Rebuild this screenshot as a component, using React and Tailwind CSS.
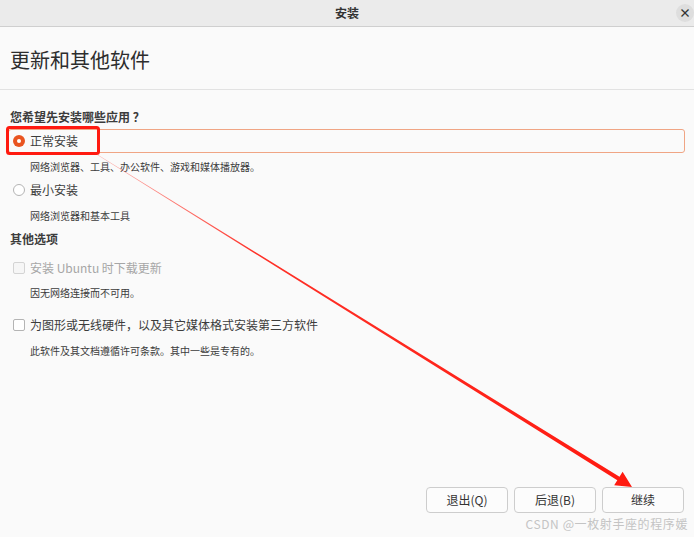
export default function App() {
    const font = { fontFamily: '"Noto Sans CJK SC", "Noto Sans", sans-serif' };
    return (
        <div
            style={font}
            className="relative w-[694px] h-[537px] bg-[#fafafa] text-[#3c3c3c] flex flex-col overflow-hidden"
        >
            {/* title bar */}
            <div className="h-[27px] shrink-0 bg-[#ebebeb] border-b border-[#cfcfcf] flex items-center justify-center relative">
                <span className="text-[12px] font-bold text-[#333]">安装</span>
                <div className="absolute right-[0px] top-[4px] w-[18px] h-[18px] rounded-full bg-[#dedede] flex items-center justify-center text-[12px] font-bold text-[#333]">
                    ×
                </div>
            </div>

            {/* heading */}
            <div className="h-[63px] shrink-0 border-b border-[#e2e2e2] flex items-center px-[10px]">
                <span className="text-[20px] text-[#2d2d2d] mt-[3px]">更新和其他软件</span>
            </div>

            {/* body */}
            <div className="flex flex-col px-[10px]">
                <div className="mt-[19px] h-[16px] leading-[16px] text-[12px] font-bold">您希望先安装哪些应用 ？</div>

                <div className="mt-[4px] ml-[-2px] mr-[-1px] h-[24px] border border-[#f0a584] rounded-[3px] flex items-center pl-[4px]">
                    <div className="w-[12px] h-[12px] rounded-full bg-[#e95420] flex items-center justify-center">
                        <div className="w-[4px] h-[4px] rounded-full bg-white"></div>
                    </div>
                    <span className="ml-[5px] text-[12px]">正常安装</span>
                </div>
                <div className="mt-[7px] h-[14px] leading-[14px] pl-[20px] text-[10px]">
                    网络浏览器、工具、办公软件、游戏和媒体播放器。
                </div>

                <div className="mt-[4px] h-[24px] flex items-center pl-[3px]">
                    <div className="w-[12px] h-[12px] rounded-full border border-[#b4b4b4] bg-white"></div>
                    <span className="ml-[5px] text-[12px]">最小安装</span>
                </div>
                <div className="mt-[7px] h-[14px] leading-[14px] pl-[20px] text-[10px]">网络浏览器和基本工具</div>

                <div className="mt-[8px] h-[16px] leading-[16px] text-[12px] font-bold">其他选项</div>

                <div className="mt-[9px] h-[24px] flex items-center pl-[3px]">
                    <div className="w-[12px] h-[12px] rounded-[2px] border border-[#d4d4d4] bg-[#f6f6f6]"></div>
                    <span className="ml-[5px] text-[12px] text-[#a6a6a6]">安装 Ubuntu 时下载更新</span>
                </div>
                <div className="mt-[6px] h-[14px] leading-[14px] pl-[20px] text-[10px]">因无网络连接而不可用。</div>

                <div className="mt-[13px] h-[24px] flex items-center pl-[3px]">
                    <div className="w-[12px] h-[12px] rounded-[2px] border border-[#b4b4b4] bg-white"></div>
                    <span className="ml-[5px] text-[12px]">为图形或无线硬件，以及其它媒体格式安装第三方软件</span>
                </div>
                <div className="mt-[7px] h-[14px] leading-[14px] pl-[20px] text-[10px]">
                    此软件及其文档遵循许可条款。其中一些是专有的。
                </div>
            </div>

            <div className="flex-1"></div>

            {/* footer buttons */}
            <div className="flex justify-end gap-[6px] pr-[10px] mb-[24px]">
                <button className="w-[82px] h-[26px] rounded-[4px] border border-[#cdcdcd] bg-[#fcfcfc] text-[12px] text-[#333]">
                    退出(Q)
                </button>
                <button className="w-[82px] h-[26px] rounded-[4px] border border-[#cdcdcd] bg-[#fcfcfc] text-[12px] text-[#333]">
                    后退(B)
                </button>
                <button className="w-[82px] h-[26px] rounded-[4px] border border-[#cdcdcd] bg-[#fcfcfc] text-[12px] text-[#333]">
                    继续
                </button>
            </div>

            {/* watermark */}
            <div className="absolute right-[6px] bottom-[6px] text-[12px] leading-[14px] tracking-[0.6px] text-[#c4c4c4]">
                CSDN @一枚射手座的程序媛
            </div>

            {/* annotation overlay */}
            <svg className="absolute left-0 top-0 pointer-events-none" width="694" height="537" viewBox="0 0 694 537">
                <defs>
                    <linearGradient id="arr" x1="95" y1="153" x2="632" y2="487" gradientUnits="userSpaceOnUse">
                        <stop offset="0" stopColor="#ff3b2f" stopOpacity="0.35" />
                        <stop offset="0.3" stopColor="#ff1a10" stopOpacity="0.9" />
                        <stop offset="1" stopColor="#ff1a10" />
                    </linearGradient>
                </defs>
                <rect x="7.5" y="127.5" width="91" height="26" rx="2" fill="none" stroke="#ff1a10" strokeWidth="3" />
                <polygon
                    points="95,153 619.5,476.8 622.6,471.7 632,487 614.2,485.3 617.3,480.2 95,153.4"
                    fill="url(#arr)"
                />
            </svg>
        </div>
    );
}
